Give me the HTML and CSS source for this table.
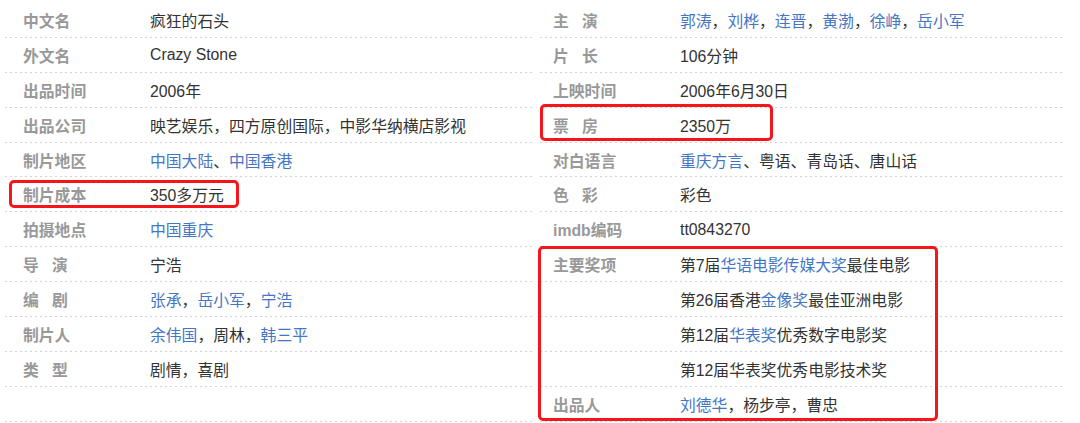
FILE: index.html
```html
<!DOCTYPE html>
<html lang="zh-CN">
<head>
<meta charset="utf-8">
<title>疯狂的石头</title>
<link rel="stylesheet" href="styles.css">
</head>
<body>
<div class="page">
  <div class="col col-left">
    <div class="row"><div class="name">中文名</div><div class="val">疯狂的石头</div></div>
    <div class="row"><div class="name">外文名</div><div class="val">Crazy Stone</div></div>
    <div class="row"><div class="name">出品时间</div><div class="val">2006年</div></div>
    <div class="row"><div class="name">出品公司</div><div class="val">映艺娱乐，四方原创国际，中影华纳横店影视</div></div>
    <div class="row"><div class="name">制片地区</div><div class="val"><a>中国大陆</a>、<a>中国香港</a></div></div>
    <div class="row"><div class="name">制片成本</div><div class="val">350多万元</div></div>
    <div class="row"><div class="name">拍摄地点</div><div class="val"><a>中国重庆</a></div></div>
    <div class="row"><div class="name">导&nbsp;&nbsp;&nbsp;演</div><div class="val">宁浩</div></div>
    <div class="row"><div class="name">编&nbsp;&nbsp;&nbsp;剧</div><div class="val"><a>张承</a>，<a>岳小军</a>，<a>宁浩</a></div></div>
    <div class="row"><div class="name">制片人</div><div class="val"><a>余伟国</a>，周林，<a>韩三平</a></div></div>
    <div class="row"><div class="name">类&nbsp;&nbsp;&nbsp;型</div><div class="val">剧情，喜剧</div></div>
    <div class="row"><div class="name"></div><div class="val"></div></div>
  </div>
  <div class="col col-right">
    <div class="row"><div class="name">主&nbsp;&nbsp;&nbsp;演</div><div class="val"><a>郭涛</a>，<a>刘桦</a>，<a>连晋</a>，<a>黄渤</a>，<a>徐峥</a>，<a>岳小军</a></div></div>
    <div class="row"><div class="name">片&nbsp;&nbsp;&nbsp;长</div><div class="val">106分钟</div></div>
    <div class="row"><div class="name">上映时间</div><div class="val">2006年6月30日</div></div>
    <div class="row"><div class="name">票&nbsp;&nbsp;&nbsp;房</div><div class="val">2350万</div></div>
    <div class="row"><div class="name">对白语言</div><div class="val"><a>重庆方言</a>、粤语、青岛话、唐山话</div></div>
    <div class="row"><div class="name">色&nbsp;&nbsp;&nbsp;彩</div><div class="val">彩色</div></div>
    <div class="row"><div class="name">imdb编码</div><div class="val">tt0843270</div></div>
    <div class="row"><div class="name">主要奖项</div><div class="val">第7届<a>华语电影传媒大奖</a>最佳电影</div></div>
    <div class="row"><div class="name"></div><div class="val">第26届香港<a>金像奖</a>最佳亚洲电影</div></div>
    <div class="row"><div class="name"></div><div class="val">第12届<a>华表奖</a>优秀数字电影奖</div></div>
    <div class="row"><div class="name"></div><div class="val">第12届华表奖优秀电影技术奖</div></div>
    <div class="row"><div class="name">出品人</div><div class="val"><a>刘德华</a>，杨步亭，曹忠</div></div>
  </div>
  <div class="mark mark-box-office"></div>
  <div class="mark mark-cost"></div>
  <div class="mark mark-awards"></div>
</div>
</body>
</html>
```

FILE: styles.css
```css
html, body {
  margin: 0;
  padding: 0;
  background: #ffffff;
}

body {
  font-family: "Liberation Sans", "Noto Sans CJK SC", sans-serif;
  font-size: 15.8px;
  color: #333333;
}

.page {
  position: relative;
  width: 1080px;
  height: 423px;
  padding-top: 3px;
  box-sizing: border-box;
  display: flex;
  overflow: hidden;
}

.col {
  display: flex;
  flex-direction: column;
}

.col-left {
  margin-left: 5px;
  width: 530px;
}

.col-right {
  margin-left: 5px;
  width: 525px;
}

.col-left .row {
  padding-left: 18px;
}

.col-right .row {
  padding-left: 13px;
}

.row {
  display: flex;
  align-items: center;
  height: 34.9px;
  box-sizing: border-box;
  flex: none;
  background-image: repeating-linear-gradient(to right, #d4d4d4 0 2px, transparent 2px 5px);
  background-size: 100% 1px;
  background-repeat: no-repeat;
  background-position: left bottom;
  white-space: nowrap;
}

.name {
  width: 127px;
  flex: none;
  color: #999999;
  font-weight: 700;
}

.val {
  color: #333333;
}

.val a {
  color: #4476c4;
  text-decoration: none;
}

.mark {
  position: absolute;
  border: 3px solid #f5151b;
  border-radius: 5px;
  box-sizing: border-box;
}

.mark-box-office {
  left: 540px;
  top: 104px;
  width: 233px;
  height: 37px;
}

.mark-cost {
  left: 9px;
  top: 180px;
  width: 230px;
  height: 28px;
}

.mark-awards {
  left: 538px;
  top: 246px;
  width: 400px;
  height: 175px;
}
```
